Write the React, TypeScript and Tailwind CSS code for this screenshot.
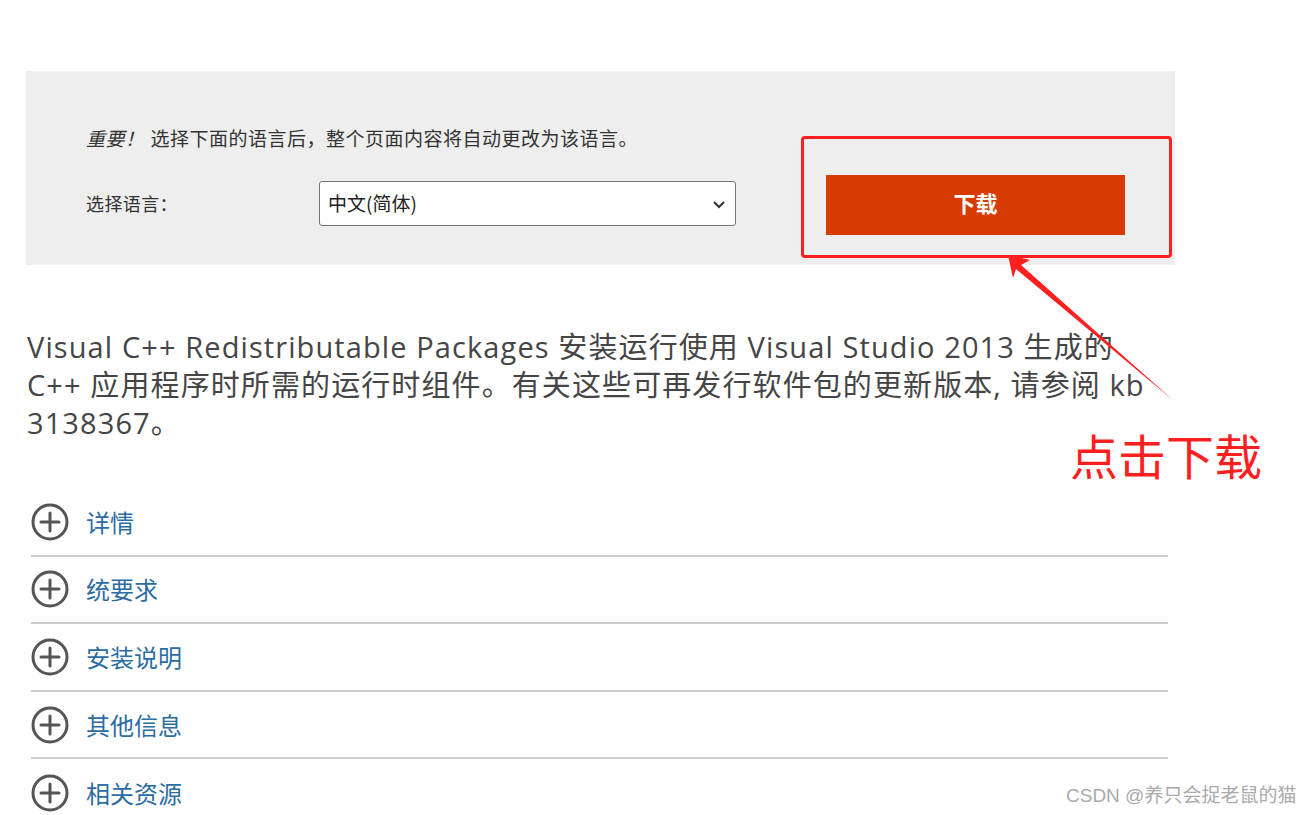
import React from "react";

const cjk = "font-['Noto_Sans_CJK_SC',sans-serif]";
const para = "font-['Open_Sans','Noto_Sans_CJK_SC',sans-serif]";

function PlusCircle(): React.ReactElement {
  return (
    <svg width="38" height="38" viewBox="0 0 38 38" className="shrink-0">
      <circle cx="19" cy="19" r="17" fill="none" stroke="#555" strokeWidth="3" />
      <path d="M19 10v18M10 19h18" stroke="#555" strokeWidth="3" strokeLinecap="round" />
    </svg>
  );
}

const sections = ["详情", "统要求", "安装说明", "其他信息", "相关资源"];

export default function App(): React.ReactElement {
  return (
    <div className={`relative h-[815px] w-[1312px] overflow-hidden bg-white ${cjk}`}>
      <div className="pl-[26px] pt-[71px]">
        {/* language panel */}
        <div className="flex h-[194px] w-[1149px] items-start bg-[#eeeeee] pl-[60px]">
          <div className="w-[650px] pt-[55px]">
            <p className="text-[19px] leading-[24px] tracking-[0.5px] text-[#333]">
              <i className="mr-[6px] font-normal">重要！</i>
              选择下面的语言后，整个页面内容将自动更改为该语言。
            </p>
            <div className="mt-[31px] flex items-center">
              <span className="w-[233px] text-[18px] tracking-[0.4px] text-[#333]">选择语言：</span>
              <div className="flex h-[45px] w-[417px] items-center justify-between rounded-[3px] border border-[#767676] bg-white pl-[8px] pr-[8px]">
                <span className="text-[19px] text-[#222]">中文(简体)</span>
                <svg width="16" height="16" viewBox="0 0 16 16">
                  <path d="M3 6l5 5 5-5" fill="none" stroke="#333" strokeWidth="2" />
                </svg>
              </div>
            </div>
          </div>
          <button className="ml-[90px] mt-[104px] flex h-[60px] w-[299px] items-center justify-center bg-[#d83b01] pb-[5px] text-[22px] font-bold text-white">
            下载
          </button>
        </div>

        {/* description */}
        <p className={`mt-[63px] whitespace-nowrap pl-[1px] text-[29px] leading-[38px] tracking-[1.1px] text-[#454545] ${para}`}>
          Visual C++ Redistributable Packages 安装运行使用 Visual Studio 2013 生成的
          <br />
          C++ 应用程序时所需的运行时组件。有关这些可再发行软件包的更新版本, 请参阅 kb
          <br />
          3138367。
        </p>

        {/* expandable sections */}
        <div className="mt-[47px] w-[1142px] pl-[5px]">
          {sections.map((s, i) => (
            <div
              key={s}
              className={`flex h-[67.6px] items-center gap-[17px] ${i < sections.length - 1 ? "border-b-2 border-[#cccccc]" : ""}`}
            >
              <PlusCircle />
              <span className="text-[24px] text-[#2b6ca3]">{s}</span>
            </div>
          ))}
        </div>
      </div>

      {/* annotation overlay */}
      <div className="absolute left-[801px] top-[136px] h-[122px] w-[371px] rounded-[4px] border-[3px] border-[#ff1f1f]" />
      <svg className="absolute left-0 top-0" width="1312" height="815">
        <polygon
          points="1008,255 1030,260 1021,265 1174,401 1016,269 1013,278"
          fill="#ff1f1f"
        />
      </svg>
      <div className="absolute left-[1070px] top-[424px] text-[48px] leading-[60px] text-[#ff1f1f]">点击下载</div>

      <div className="absolute left-[1066px] top-[783px] text-[19px] leading-[26px] text-[#aaaaaa] font-['Liberation_Sans','Noto_Sans_CJK_SC',sans-serif]">
        CSDN @养只会捉老鼠的猫
      </div>
    </div>
  );
}
